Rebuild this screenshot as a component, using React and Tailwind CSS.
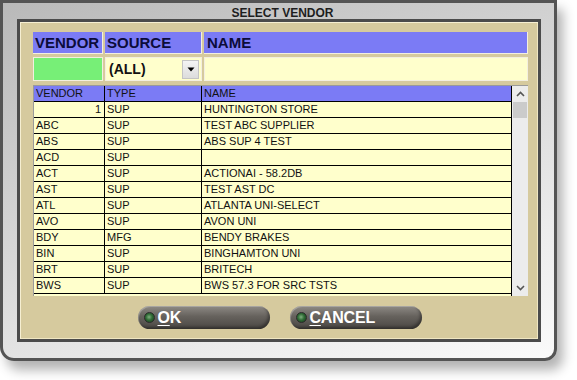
import React from "react";

const rows = [
  ["1", "SUP", "HUNTINGTON STORE"],
  ["ABC", "SUP", "TEST ABC SUPPLIER"],
  ["ABS", "SUP", "ABS SUP 4 TEST"],
  ["ACD", "SUP", ""],
  ["ACT", "SUP", "ACTIONAI - 58.2DB"],
  ["AST", "SUP", "TEST AST DC"],
  ["ATL", "SUP", "ATLANTA UNI-SELECT"],
  ["AVO", "SUP", "AVON UNI"],
  ["BDY", "MFG", "BENDY BRAKES"],
  ["BIN", "SUP", "BINGHAMTON UNI"],
  ["BRT", "SUP", "BRITECH"],
  ["BWS", "SUP", "BWS 57.3 FOR SRC TSTS"],
];

function PillButton({ first, rest }) {
  return (
    <button className="flex items-center w-[132px] h-[23px] rounded-full pl-[6px] bg-[linear-gradient(to_bottom,#8e8a85_0%,#66625d_45%,#4a4743_100%)] shadow-[inset_1px_1px_0_rgba(255,255,255,0.25),inset_-2px_-2px_3px_rgba(0,0,0,0.35)]">
      <span className="w-[11px] h-[11px] rounded-full bg-[radial-gradient(circle_at_45%_45%,#7fb07f_0%,#2f6a35_45%,#153a18_100%)] border border-[#2a2a2a]" />
      <span className="ml-[3px] text-white font-bold text-[16px] leading-none tracking-[-0.2px]">
        <span className="underline underline-offset-2">{first}</span>
        {rest}
      </span>
    </button>
  );
}

export default function App() {
  return (
    <div className="w-[577px] h-[380px] bg-white font-['Liberation_Sans',Arial,sans-serif]">
      <div className="w-[557px] h-[361px] border-[3px] border-[#545454] rounded-bl-[14px] rounded-br-[12px] bg-[linear-gradient(160deg,#b9b9b9_0%,#d6d6d6_45%,#ebebeb_75%,#fafafa_100%)] shadow-[6px_9px_12px_rgba(0,0,0,0.3)] flex flex-col">
        <div className="h-[16px] flex items-end justify-center pl-[8px] text-[12px] font-bold text-[#1e1e1e] leading-none">
          SELECT VENDOR
        </div>
        <div className="ml-[14px] w-[524px] h-[323px] border-[3px] border-[#4b4b4b] bg-[#d6ca9e] shadow-[inset_1px_1px_0_#f6efd2,inset_-1px_-1px_0_#efe6c2] flex flex-col pl-[13px] pr-[10px] pt-[10px]">
          {/* header labels */}
          <div className="flex gap-[2px] h-[22px]">
            <div className="w-[70px] bg-[#7b7bf5] border-r border-b border-[#f3efe0] text-[15px] font-bold text-[#0c0c3a] leading-[22px] pl-[2px]">VENDOR</div>
            <div className="w-[97px] bg-[#7b7bf5] border-r border-b border-[#f3efe0] text-[15px] font-bold text-[#0c0c3a] leading-[22px] pl-[2px]">SOURCE</div>
            <div className="flex-1 bg-[#7b7bf5] border-r border-b border-[#f3efe0] text-[15px] font-bold text-[#0c0c3a] leading-[22px] pl-[3px]">NAME</div>
          </div>
          {/* filter row */}
          <div className="flex gap-[2px] h-[24px] mt-[3px]">
            <div className="w-[70px] bg-[#f3efe0] p-[1px]">
              <div className="w-full h-full bg-[#77ef77]" />
            </div>
            <div className="w-[97px] bg-[#ffffcc] border border-[#f3efe0] flex items-center pl-[3px] pr-[2px]">
              <span className="flex-1 text-[14px] font-bold text-[#111]">(ALL)</span>
              <div className="w-[17px] h-[19px] bg-[linear-gradient(to_bottom,#f4f4f4,#dcdcdc)] border border-[#c4c4c4] flex items-center justify-center">
                <svg width="8" height="5" viewBox="0 0 8 5">
                  <path d="M0.5 0.5h7L4 4.5z" fill="#000" />
                </svg>
              </div>
            </div>
            <div className="flex-1 bg-[#ffffcc] border border-[#f3efe0]" />
          </div>
          {/* grid */}
          <div className="flex mt-[4px] h-[211px] border-t border-l border-[#9a9a9a] bg-[#ffffcc]">
            <div className="flex-1 flex flex-col text-[11px] text-[#111] leading-[15px]">
              <div className="flex h-[16px] bg-[#7b7bf5] border-b border-black">
                <div className="w-[71px] border-r border-black pl-[2px]">VENDOR</div>
                <div className="w-[97px] border-r border-black pl-[2px]">TYPE</div>
                <div className="flex-1 pl-[2px]">NAME</div>
              </div>
              {rows.map((r, i) => (
                <div key={i} className="flex h-[16px] border-b border-black">
                  <div className={"w-[71px] border-r border-black " + (i === 0 ? "text-right pr-[3px]" : "pl-[2px]")}>{r[0]}</div>
                  <div className="w-[97px] border-r border-black pl-[2px]">{r[1]}</div>
                  <div className="flex-1 pl-[2px]">{r[2]}</div>
                </div>
              ))}
            </div>
            <div className="w-[17px] border-l border-black bg-[#ececec] flex flex-col">
              <div className="h-[16px] flex items-center justify-center">
                <svg width="9" height="6" viewBox="0 0 9 6">
                  <path d="M1 5L4.5 1.5L8 5" stroke="#555" strokeWidth="1.6" fill="none" />
                </svg>
              </div>
              <div className="h-[16px] mx-[1px] bg-[#cbcbcb]" />
              <div className="flex-1" />
              <div className="h-[16px] flex items-center justify-center">
                <svg width="9" height="6" viewBox="0 0 9 6">
                  <path d="M1 1L4.5 4.5L8 1" stroke="#555" strokeWidth="1.6" fill="none" />
                </svg>
              </div>
            </div>
          </div>
          {/* buttons */}
          <div className="flex justify-center gap-[20px] mt-[10px] pr-[2px]">
            <PillButton first="O" rest="K" />
            <PillButton first="C" rest="ANCEL" />
          </div>
        </div>
      </div>
    </div>
  );
}
